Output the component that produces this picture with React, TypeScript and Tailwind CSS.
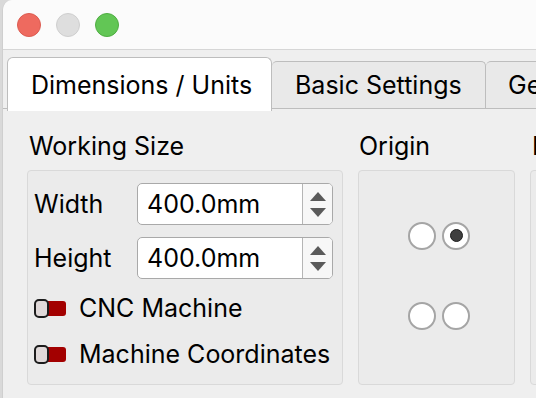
import React from "react";

function Spin({ value }: { value: string }) {
  return (
    <div className="flex h-[42px] w-[196px] shrink-0 overflow-hidden rounded-[5px] border-[1.5px] border-[#a9a9a9] bg-white">
      <div className="flex flex-1 items-center pl-[9px] text-[25px] leading-[30px] text-black">{value}</div>
      <div className="flex w-[30px] flex-col items-center justify-center gap-[7px] border-l-[1.5px] border-[#b5b5b5] bg-[#f7f7f7]">
        <svg width="16" height="9" viewBox="0 0 16 9">
          <path d="M8 0 L16 9 L0 9 Z" fill="#5a5a5a" />
        </svg>
        <svg width="16" height="9" viewBox="0 0 16 9">
          <path d="M0 0 L16 0 L8 9 Z" fill="#5a5a5a" />
        </svg>
      </div>
    </div>
  );
}

function Toggle({ label }: { label: string }) {
  return (
    <div className="flex h-[30px] items-center gap-[13px]">
      <div className="relative h-[19px] w-[32px] shrink-0">
        <div className="absolute right-0 top-[2px] h-[15px] w-[22px] rounded-r-[3px] bg-[#a30000]" />
        <div className="absolute left-0 top-0 h-[19px] w-[15px] rounded-[5px] border-2 border-[#1c1c1c] bg-[#e0d9d9]" />
      </div>
      <span className="whitespace-nowrap text-[25px] leading-[30px] text-black">{label}</span>
    </div>
  );
}

function Radio({ checked }: { checked?: boolean }) {
  return (
    <div className="flex h-[28px] w-[28px] items-center justify-center rounded-full border-2 border-[#a5a5a5] bg-white">
      {checked && <div className="h-[13px] w-[13px] rounded-full border border-[#1e1e1e] bg-[#3f3f3f]" />}
    </div>
  );
}

export default function App() {
  return (
    <div
      className="flex h-[398px] w-[536px] overflow-hidden bg-[#d9d9d9] pl-[2px]"
      style={{ fontFamily: "Inter, 'Liberation Sans', sans-serif" }}
    >
      <div className="flex flex-1 flex-col overflow-hidden rounded-tl-[10px] border-l border-[#cfcfcf] bg-[#efefef]">
        {/* Title bar */}
        <div className="flex h-[50px] shrink-0 items-center gap-[15px] border-b border-[#d6d6d6] bg-[#fbfbfb] pl-[14px]">
          <div className="h-[24px] w-[24px] rounded-full border border-[#dc5c51] bg-[#ee6a5f]" />
          <div className="h-[24px] w-[24px] rounded-full border border-[#cfcfcf] bg-[#dedede]" />
          <div className="h-[24px] w-[24px] rounded-full border border-[#4fae42] bg-[#62c655]" />
        </div>

        {/* Tabs */}
        <div className="flex h-[59px] shrink-0 items-end border-b-[1.5px] border-[#bdbdbd] pl-[4px]">
          <div className="relative z-10 -mb-[3px] flex h-[54px] w-[265px] shrink-0 items-center whitespace-nowrap rounded-t-[6px] border-[1.5px] border-b-0 border-[#bdbdbd] bg-white pl-[23px] text-[25px] leading-[30px] text-black">
            Dimensions / Units
          </div>
          <div className="flex h-[47px] w-[214px] shrink-0 items-center whitespace-nowrap rounded-t-[5px] border-[1.5px] border-b-0 border-l-0 border-[#bdbdbd] bg-[#e9e9e9] pl-[23px] text-[25px] leading-[30px] text-black">
            Basic Settings
          </div>
          <div className="flex h-[47px] w-[120px] shrink-0 items-center whitespace-nowrap rounded-t-[5px] border-[1.5px] border-b-0 border-l-0 border-[#bdbdbd] bg-[#e9e9e9] pl-[22px] text-[25px] leading-[30px] text-black">
            General
          </div>
        </div>

        {/* Content */}
        <div className="flex gap-[15px] pl-[24px] pt-[22px]">
          <div className="flex w-[316px] shrink-0 flex-col">
            <div className="h-[39px] pl-[2px] text-[25px] leading-[30px] text-black">Working Size</div>
            <div className="flex h-[215px] flex-col rounded-[4px] border-[1.5px] border-[#d9d9d9] bg-[#ebebeb] pl-[6px] pr-[9px] pt-[12px]">
              <div className="flex items-center justify-between">
                <span className="text-[25px] leading-[30px] text-black">Width</span>
                <Spin value="400.0mm" />
              </div>
              <div className="mt-[12px] flex items-center justify-between">
                <span className="text-[25px] leading-[30px] text-black">Height</span>
                <Spin value="400.0mm" />
              </div>
              <div className="mt-[14px] flex flex-col gap-[16px]">
                <Toggle label="CNC Machine" />
                <Toggle label="Machine Coordinates" />
              </div>
            </div>
          </div>

          <div className="flex w-[157px] shrink-0 flex-col">
            <div className="h-[39px] pl-[1px] text-[25px] leading-[30px] text-black">Origin</div>
            <div className="flex h-[215px] items-center justify-center rounded-[4px] border-[1.5px] border-[#d9d9d9] bg-[#ebebeb] pb-[4px] pl-[5px]">
              <div className="grid grid-cols-2 gap-x-[6px] gap-y-[52px]">
                <Radio />
                <Radio checked />
                <Radio />
                <Radio />
              </div>
            </div>
          </div>

          <div className="flex w-[157px] shrink-0 flex-col">
            <div className="h-[39px] whitespace-nowrap pl-[2px] text-[25px] leading-[30px] text-black">Layers</div>
            <div className="h-[215px] rounded-[4px] border-[1.5px] border-[#d9d9d9] bg-[#ebebeb]" />
          </div>
        </div>
      </div>
    </div>
  );
}
